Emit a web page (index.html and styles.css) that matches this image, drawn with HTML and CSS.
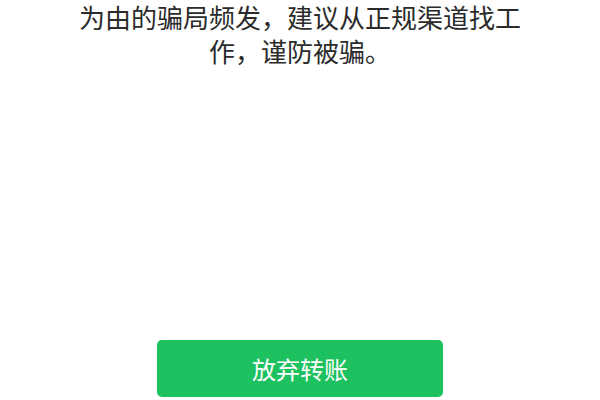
FILE: index.html
```html
<!DOCTYPE html>
<html lang="zh-CN">
<head>
<meta charset="utf-8">
<title>提示</title>
<link rel="stylesheet" href="styles.css">
</head>
<body>
<div class="page">
  <p class="msg">为由的骗局频发，建议从正规渠道找工作，谨防被骗。</p>
  <button class="btn" type="button">放弃转账</button>
</div>
</body>
</html>
```
FILE: styles.css
```css
html, body {
  margin: 0;
  padding: 0;
  background: #ffffff;
}
.page {
  height: 400px;
  display: flex;
  flex-direction: column;
  align-items: center;
  justify-content: space-between;
  font-family: "Noto Sans CJK SC", "Noto Sans", sans-serif;
  box-sizing: border-box;
  padding-bottom: 3px;
}
.msg {
  margin: 0;
  padding: 0 76px;
  box-sizing: border-box;
  width: 600px;
  text-align: center;
  font-size: 26px;
  line-height: 34px;
  color: #2b2b2b;
}
.btn {
  width: 286px;
  height: 57px;
  border: none;
  border-radius: 5px;
  background: #1ec15f;
  color: #ffffff;
  font-family: "Noto Sans CJK SC", "Noto Sans", sans-serif;
  font-size: 24px;
  padding: 0;
  cursor: pointer;
}
```
